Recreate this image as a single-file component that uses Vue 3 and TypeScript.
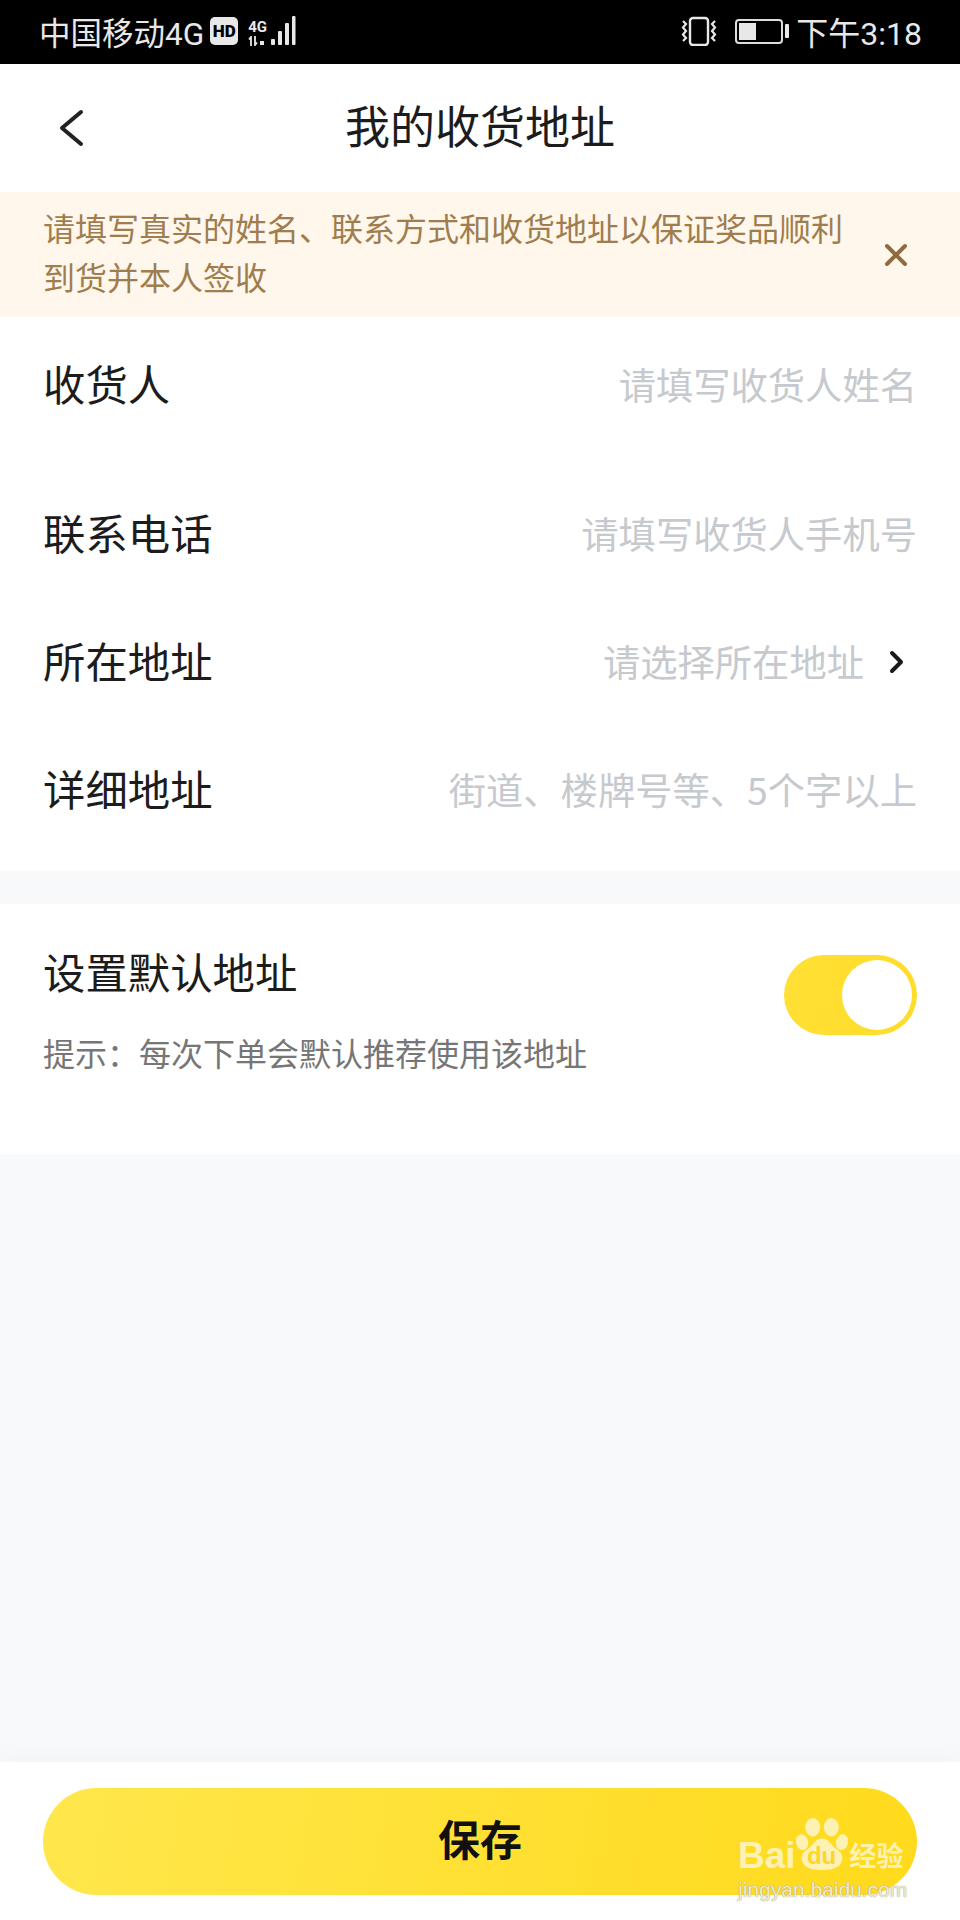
<script setup lang="ts">
const fields = [
  { key: 'name', label: '收货人', hint: '请填写收货人姓名' },
  { key: 'phone', label: '联系电话', hint: '请填写收货人手机号' },
  { key: 'area', label: '所在地址', hint: '请选择所在地址', arrow: true },
  { key: 'detail', label: '详细地址', hint: '街道、楼牌号等、5个字以上' },
];
</script>

<template>
  <div class="page">
    <div class="status-bar">
      <div class="status-left">
        <span>中国移动4G</span>
        <span class="hd">HD</span>
        <div class="signal">
          <div class="signal-net">
            <span>4G</span>
            <svg width="17" height="10" viewBox="0 0 17 10">
              <path d="M3 10V1L1 3.5M7 0v9l2-2.5" fill="none" stroke="#e8e8e8" stroke-width="1.8" />
              <rect x="12" y="5" width="4" height="4" fill="#e8e8e8" />
            </svg>
          </div>
          <svg class="bars" width="25" height="30" viewBox="0 0 25 30">
            <rect x="0" y="23" width="4" height="6" rx="1" />
            <rect x="7" y="15" width="4" height="14" rx="1" />
            <rect x="14" y="7" width="4" height="22" rx="1" />
            <rect x="21" y="0" width="3.5" height="29" rx="1" />
          </svg>
        </div>
      </div>
      <div class="status-right">
        <svg width="38" height="30" viewBox="0 0 38 30" fill="none" stroke="#e8e8e8" stroke-width="2.4">
          <rect x="10" y="2" width="18" height="27" rx="3" />
          <path d="M3 5l3 3-3 3.5 3 3.5-3 3.5 3 3.5-3 3M35 5l-3 3 3 3.5-3 3.5 3 3.5-3 3.5 3 3" stroke-width="2.2" />
        </svg>
        <div class="battery">
          <div class="battery-body"><i></i></div>
          <b></b>
        </div>
        <span class="clock">下午3:18</span>
      </div>
    </div>

    <div class="nav">
      <svg class="back" width="26" height="44" viewBox="0 0 26 44">
        <path d="M22 6 3 22l19 16" fill="none" stroke="#222" stroke-width="4" stroke-linecap="round" stroke-linejoin="round" />
      </svg>
      <span class="nav-title">我的收货地址</span>
    </div>

    <div class="notice">
      <p>请填写真实的姓名、联系方式和收货地址以保证奖品顺利到货并本人签收</p>
      <svg width="24" height="24" viewBox="0 0 24 24">
        <path d="M3 3l18 18M21 3 3 21" stroke="#8f6b3e" stroke-width="4" stroke-linecap="round" />
      </svg>
    </div>

    <div class="form">
      <div v-for="f in fields" :key="f.key" class="row" :class="'row-' + f.key">
        <span class="label">{{ f.label }}</span>
        <div class="value">
          <span>{{ f.hint }}</span>
          <svg v-if="f.arrow" class="arrow" width="15" height="24" viewBox="0 0 15 24">
            <path d="M3 3l9 9-9 9" fill="none" stroke="#1a1a1a" stroke-width="4" stroke-linecap="round" stroke-linejoin="round" />
          </svg>
        </div>
      </div>
    </div>

    <div class="default-box">
      <div>
        <div class="label">设置默认地址</div>
        <div class="tip">提示：每次下单会默认推荐使用该地址</div>
      </div>
      <div class="switch"><i></i></div>
    </div>

    <div class="spacer"></div>

    <div class="footer">
      <div class="save">保存</div>
    </div>

    <div class="watermark">
      <div class="wm-top">
        <span class="wm-bai">Bai</span>
        <div class="wm-paw">
          <svg width="52" height="52" viewBox="0 0 56 56" fill="#fdf1b4">
            <ellipse cx="18" cy="10" rx="8" ry="10" />
            <ellipse cx="38" cy="10" rx="8" ry="10" />
            <ellipse cx="6.5" cy="26" rx="6.5" ry="8.5" transform="rotate(-15 6.5 26)" />
            <ellipse cx="49.5" cy="26" rx="6.5" ry="8.5" transform="rotate(15 49.5 26)" />
            <path d="M28 22c-8 0-9 7-15 11-7 4-8 9-6 14 2 6 9 9 21 9s19-3 21-9c2-5 1-10-6-14-6-4-7-11-15-11Z" />
          </svg>
          <span class="wm-du">du</span>
        </div>
        <span class="wm-jy">经验</span>
      </div>
      <div class="wm-url">jingyan.baidu.com</div>
    </div>
  </div>
</template>

<style scoped>
.page {
  position: relative;
  width: 960px;
  height: 1920px;
  display: flex;
  flex-direction: column;
  background: #f8f9fb;
  overflow: hidden;
  font-family: "Noto Sans CJK SC", "Noto Sans", sans-serif;
  color: #1c1c1c;
}
.status-bar {
  height: 64px;
  flex: none;
  background: #000;
  color: #e8e8e8;
  display: flex;
  align-items: center;
  justify-content: space-between;
  padding: 0 38px 2px 39px;
  box-sizing: border-box;
  font-size: 32px;
  font-family: Roboto, "Noto Sans CJK SC", sans-serif;
}
.status-left,
.status-right {
  display: flex;
  align-items: center;
}
.status-left {
  font-size: 31.5px;
}
.hd {
  width: 28px;
  height: 28px;
  margin-left: 6px;
  border-radius: 5px;
  background: #e8e8e8;
  color: #000;
  font-size: 17px;
  font-weight: 900;
  line-height: 28px;
  text-align: center;
}
.signal {
  display: flex;
  align-items: flex-end;
  margin-left: 10px;
  gap: 4px;
}
.signal-net {
  display: flex;
  flex-direction: column;
  align-items: flex-start;
  font-size: 15px;
  font-weight: 700;
  line-height: 18px;
}
.bars {
  fill: #e8e8e8;
}
.battery {
  display: flex;
  align-items: center;
  margin-left: 17px;
}
.battery-body {
  width: 48px;
  height: 25px;
  border: 2px solid #ddd;
  border-radius: 4px;
  padding: 2px;
  box-sizing: border-box;
}
.battery-body i {
  display: block;
  width: 17px;
  height: 100%;
  background: #e8e8e8;
}
.battery b {
  width: 4px;
  height: 14px;
  margin-left: 2px;
  background: #e8e8e8;
  border-radius: 1px;
}
.clock {
  margin-left: 7px;
}
.nav {
  position: relative;
  height: 128px;
  flex: none;
  background: #fff;
  display: flex;
  align-items: center;
  justify-content: center;
}
.back {
  position: absolute;
  left: 59px;
  top: 42px;
}
.nav-title {
  font-size: 45px;
  line-height: 122px;
  margin-bottom: 7px;
}
.notice {
  height: 125px;
  flex: none;
  background: #fff7eb;
  display: flex;
  align-items: center;
  justify-content: space-between;
  padding: 0 52px 0 43px;
  box-sizing: border-box;
}
.notice p {
  margin: 0;
  padding-bottom: 5px;
  width: 802px;
  color: #a07d4f;
  font-size: 32px;
  line-height: 49px;
}
.form {
  flex: none;
  background: #fff;
  padding: 4px 43px 17px;
}
.row {
  height: 128px;
  display: flex;
  align-items: center;
  justify-content: space-between;
}
.row-name {
  margin-bottom: 21px;
}
.label {
  font-size: 42.4px;
  color: #1c1c1c;
}
.row .label {
  padding-bottom: 5px;
}
.value {
  display: flex;
  align-items: center;
  color: #c6c9ce;
  font-size: 37.3px;
}
.value span {
  padding-bottom: 3px;
}
.arrow {
  margin-left: 25px;
  margin-right: 13px;
}
.default-box {
  flex: none;
  height: 250px;
  margin-top: 33px;
  background: #fff;
  display: flex;
  align-items: flex-start;
  justify-content: space-between;
  padding: 36px 43px 0;
  box-sizing: border-box;
}
.tip {
  margin-top: 28px;
  color: #767676;
  font-size: 32px;
}
.switch {
  width: 133px;
  height: 80px;
  margin-top: 15px;
  border-radius: 40px;
  background: linear-gradient(100deg, #ffe035, #ffdc28);
  padding: 5px;
  box-sizing: border-box;
  display: flex;
  justify-content: flex-end;
  align-items: center;
}
.switch i {
  width: 70px;
  height: 70px;
  border-radius: 50%;
  background: #fff;
}
.spacer {
  flex: 1;
}
.footer {
  flex: none;
  height: 158px;
  background: #fff;
  padding: 26px 43px 0;
  box-sizing: border-box;
  box-shadow: 0 -8px 24px rgba(0, 0, 0, 0.025);
}
.save {
  height: 107px;
  border-radius: 54px;
  background: linear-gradient(100deg, #ffe74c, #ffda1c);
  color: #111;
  font-size: 42px;
  font-weight: 700;
  line-height: 100px;
  text-align: center;
}
.watermark {
  position: absolute;
  left: 738px;
  top: 1818px;
  width: 172px;
  color: #fdf1b4;
  font-family: "Liberation Sans", sans-serif;
}
.wm-top {
  display: flex;
  align-items: flex-end;
  height: 52px;
}
.wm-bai {
  font-size: 37px;
  font-weight: 700;
  line-height: 38px;
  margin-bottom: -5px;
}
.wm-paw {
  position: relative;
  width: 52px;
  height: 52px;
  margin-left: 0;
}
.wm-paw svg {
  display: block;
}
.wm-du {
  position: absolute;
  left: 0;
  right: 0;
  bottom: 1px;
  text-align: center;
  color: #fbd72c;
  font-size: 24px;
  font-weight: 700;
  line-height: 26px;
}
.wm-jy {
  font-family: "Noto Sans CJK SC", sans-serif;
  font-size: 27px;
  font-weight: 700;
  line-height: 30px;
  margin-left: 2px;
  white-space: nowrap;
}
.wm-url {
  margin-top: 8px;
  color: rgba(255, 246, 205, 0.9);
  text-shadow: 0 0 1px #999, 0 0 1px #aaa;
  font-size: 21px;
  line-height: 24px;
  white-space: nowrap;
}
</style>
